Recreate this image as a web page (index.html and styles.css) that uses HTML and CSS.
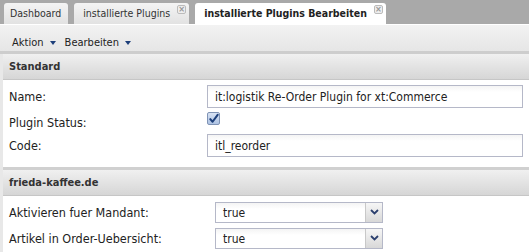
FILE: index.html
```html
<!DOCTYPE html>
<html lang="de">
<head>
    <meta charset="UTF-8">
    <title>installierte Plugins Bearbeiten</title>
    <link rel="stylesheet" href="styles.css">
</head>
<body>

    <div class="tabstrip">
        <div class="tab">Dashboard</div>
        <div class="tab closable">installierte Plugins <span class="tab-close">&times;</span></div>
        <div class="tab active closable">installierte Plugins Bearbeiten <span class="tab-close">&times;</span></div>
    </div>

    <div class="toolbar">
        <span class="menu">Aktion <span class="caret"></span></span>
        <span class="menu">Bearbeiten <span class="caret"></span></span>
    </div>

    <div class="content">
        <div class="panel">
            <div class="panel-header">Standard</div>
            <div class="form">
                <div class="row">
                    <label>Name:</label>
                    <input class="text wide" type="text" value="it:logistik Re-Order Plugin for xt:Commerce">
                </div>
                <div class="row check-row">
                    <label>Plugin Status:</label>
                    <span class="checkbox">
                        <svg width="12" height="12" viewBox="0 0 12 12">
                            <path d="M2.5 6.2 L5 9 L10.5 1.5" fill="none" stroke="#1d3f7a" stroke-width="2.2" stroke-linecap="round" stroke-linejoin="round"/>
                        </svg>
                    </span>
                </div>
                <div class="row">
                    <label>Code:</label>
                    <input class="text wide" type="text" value="itl_reorder">
                </div>
            </div>
        </div>

        <div class="panel second">
            <div class="panel-header">frieda-kaffee.de</div>
            <div class="form shop">
                <div class="row">
                    <label>Aktivieren fuer Mandant:</label>
                    <div class="combo">
                        <span class="combo-value">true</span>
                        <span class="combo-trigger">
                            <svg width="9" height="6" viewBox="0 0 9 6"><path d="M1 1 L4.5 4.5 L8 1" fill="none" stroke="#2b3f6e" stroke-width="1.8"/></svg>
                        </span>
                    </div>
                </div>
                <div class="row">
                    <label>Artikel in Order-Uebersicht:</label>
                    <div class="combo">
                        <span class="combo-value">true</span>
                        <span class="combo-trigger">
                            <svg width="9" height="6" viewBox="0 0 9 6"><path d="M1 1 L4.5 4.5 L8 1" fill="none" stroke="#2b3f6e" stroke-width="1.8"/></svg>
                        </span>
                    </div>
                </div>
            </div>
        </div>
    </div>

</body>
</html>
```

FILE: styles.css
```css
* {
    margin: 0;
    padding: 0;
    box-sizing: border-box;
}

body {
    font-family: 'DejaVu Sans Condensed', 'DejaVu Sans', sans-serif;
    font-size: 12px;
    color: #222;
    background-color: #e8e8e8;
    width: 529px;
    height: 252px;
    overflow: hidden;
}

/* tabs */
.tabstrip {
    display: flex;
    gap: 6px;
    height: 24px;
    padding: 3px 0 0 4px;
    background-color: #a9a9a9;
    font-size: 10.5px;
}

.tab {
    position: relative;
    height: 21px;
    line-height: 21px;
    padding: 0 7px 0 6px;
    color: #333;
    background: linear-gradient(#f4f4f4, #e2e2e2);
    border-radius: 3px 3px 0 0;
}

.tab.closable {
    padding: 0 19px 0 9px;
}

.tab.active {
    font-weight: bold;
    color: #222;
    background: #fff;
}

.tab-close {
    position: absolute;
    top: 2px;
    right: 3px;
    width: 9px;
    height: 9px;
    line-height: 7px;
    font-size: 9px;
    font-weight: bold;
    text-align: center;
    color: #999;
    background-color: #eee;
    border: 1px solid #bbb;
    border-radius: 2px;
}

/* toolbar */
.toolbar {
    height: 30px;
    display: flex;
    align-items: flex-start;
    gap: 9px;
    padding: 11px 0 0 12px;
    font-size: 11px;
    line-height: 13px;
    background: linear-gradient(#f2f2f2, #e6e6e6);
    border-top: 1px solid #fff;
    border-bottom: 3px solid #cdcdcd;
}

.caret {
    display: inline-block;
    width: 0;
    height: 0;
    margin-left: 3px;
    vertical-align: middle;
    border-left: 3px solid transparent;
    border-right: 3px solid transparent;
    border-top: 4px solid #1d3f7a;
}

/* panels */
.content {
    padding-left: 3px;
}

.panel {
    background-color: #fff;
}

.panel.second {
    border-top: 3px solid #d0d0d0;
}

.panel-header {
    height: 26px;
    line-height: 26px;
    padding-left: 6px;
    font-size: 11px;
    font-weight: bold;
    color: #333;
    background: linear-gradient(#f0f0f0, #d6d6d6);
    border-bottom: 1px solid #c6c6c6;
}

.form {
    display: flex;
    flex-direction: column;
    gap: 2px;
    padding: 5px 6px 10px 6px;
}

.form.shop {
    gap: 4px;
    padding: 5px 6px 4px 6px;
}

.row {
    display: flex;
    align-items: center;
    min-height: 22px;
}

.row label {
    width: 198px;
    flex-shrink: 0;
    font-size: 12.5px;
}

.form.shop .row label {
    width: 206px;
}

.text {
    height: 23px;
    padding: 0 7px;
    font: inherit;
    color: #222;
    border: 1px solid #b5b8c8;
    background: linear-gradient(#f4f4f4, #fff 6px);
    outline: none;
}

.text.wide {
    width: 316px;
}

.check-row {
    align-items: flex-start;
    min-height: 22px;
}

.check-row label {
    padding-top: 5px;
}

.checkbox {
    display: flex;
    align-items: center;
    justify-content: center;
    width: 13px;
    height: 13px;
    margin-top: 2px;
    border: 1px solid #7f93b5;
    border-radius: 2px;
    background: linear-gradient(#d7e2f3, #aec3e3);
}

.combo {
    display: flex;
    width: 168px;
    height: 21px;
    border: 1px solid #b5b8c8;
    background: linear-gradient(#f4f4f4, #fff 6px);
}

.combo-value {
    flex: 1;
    line-height: 20px;
    padding-left: 7px;
}

.combo-trigger {
    width: 17px;
    display: flex;
    align-items: center;
    justify-content: center;
    border-left: 1px solid #c8c8c8;
    background: linear-gradient(#f6f6f6, #d8d8d8);
}
```
